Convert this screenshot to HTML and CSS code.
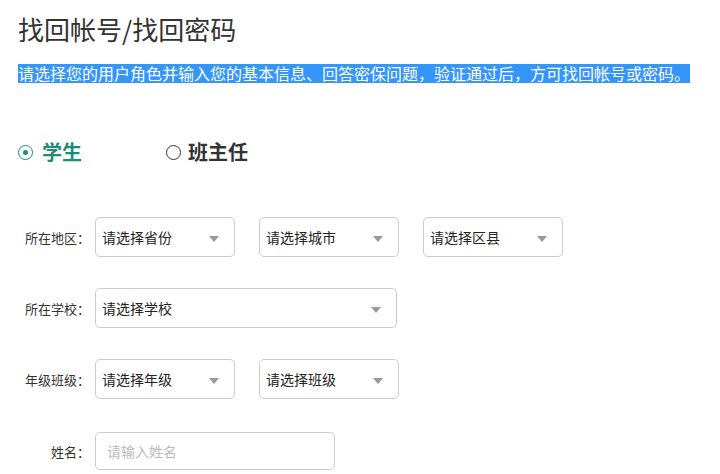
FILE: index.html
```html
<!DOCTYPE html>
<html lang="zh-CN">
<head>
<meta charset="utf-8">
<title>找回帐号/找回密码</title>
<link rel="stylesheet" href="styles.css">
</head>
<body>
<div class="page">
  <h1 class="title">找回帐号/找回密码</h1>
  <p class="intro">请选择您的用户角色并输入您的基本信息、回答密保问题，验证通过后，方可找回帐号或密码。</p>

  <div class="roles">
    <label class="role role-active"><span class="radio radio-on"></span><span class="role-text">学生</span></label>
    <label class="role"><span class="radio"></span><span class="role-text">班主任</span></label>
  </div>

  <div class="form">
    <div class="row">
      <span class="label">所在地区：</span>
      <div class="fields">
        <div class="select"><span class="select-text">请选择省份</span><span class="arrow"></span></div>
        <div class="select"><span class="select-text">请选择城市</span><span class="arrow"></span></div>
        <div class="select"><span class="select-text">请选择区县</span><span class="arrow"></span></div>
      </div>
    </div>
    <div class="row">
      <span class="label">所在学校：</span>
      <div class="fields">
        <div class="select select-wide"><span class="select-text">请选择学校</span><span class="arrow"></span></div>
      </div>
    </div>
    <div class="row">
      <span class="label">年级班级：</span>
      <div class="fields">
        <div class="select"><span class="select-text">请选择年级</span><span class="arrow"></span></div>
        <div class="select"><span class="select-text">请选择班级</span><span class="arrow"></span></div>
      </div>
    </div>
    <div class="row row-last">
      <span class="label">姓名：</span>
      <div class="fields">
        <input class="input" type="text" placeholder="请输入姓名">
      </div>
    </div>
  </div>
</div>
</body>
</html>
```

FILE: styles.css
```css
html, body {
  margin: 0;
  padding: 0;
  background: #ffffff;
}

body {
  font-family: "Noto Sans CJK SC", "Noto Sans", sans-serif;
  color: #333333;
  overflow: hidden;
}

.page {
  padding: 14px 0 0 18px;
}

.title {
  margin: 0;
  font-size: 26px;
  line-height: 30px;
  font-weight: 400;
  color: #333333;
}

.intro {
  margin: 20px 0 0 0;
  width: fit-content;
  padding-right: 0;
  font-size: 16px;
  line-height: 19px;
  color: #ffffff;
  background: #3495fb;
  white-space: nowrap;
}

.roles {
  display: flex;
  margin-top: 59px;
  height: 20px;
  align-items: center;
}

.role {
  display: flex;
  align-items: center;
  width: 148px;
  font-size: 20px;
  font-weight: 700;
  color: #333333;
}

.role-active {
  color: #1e8c76;
}

.radio {
  box-sizing: border-box;
  width: 15px;
  height: 15px;
  border: 1.6px solid #333333;
  border-radius: 50%;
  margin-right: 9px;
  display: flex;
  align-items: center;
  justify-content: center;
}

.role + .role .radio {
  margin-right: 7px;
}

.radio-on {
  border-color: #1e8c76;
}

.radio-on::after {
  content: "";
  width: 5px;
  height: 5px;
  border-radius: 50%;
  background: #1e8c76;
}

.role-text {
  line-height: 20px;
}

.form {
  margin-top: 55px;
  display: flex;
  flex-direction: column;
  gap: 31px;
}

.row {
  display: flex;
  align-items: center;
}

.row-last {
  margin-top: 2px;
}

.label {
  width: 72px;
  padding-right: 5px;
  text-align: right;
  font-size: 13px;
  color: #333333;
  white-space: nowrap;
}

.fields {
  display: flex;
  gap: 24px;
}

.select {
  box-sizing: border-box;
  position: relative;
  width: 140px;
  height: 40px;
  border: 1px solid #cccccc;
  border-radius: 5px;
  display: flex;
  align-items: center;
  padding-left: 6px;
  background: #ffffff;
}

.select-wide {
  width: 302px;
}

.select-text {
  font-size: 14px;
  color: #222222;
}

.arrow {
  position: absolute;
  right: 15px;
  top: 18px;
  width: 0;
  height: 0;
  border-left: 5px solid transparent;
  border-right: 5px solid transparent;
  border-top: 6px solid #999999;
}

.input {
  box-sizing: border-box;
  width: 240px;
  height: 38px;
  border: 1px solid #cccccc;
  border-radius: 5px;
  padding: 0 11px;
  font-family: "Noto Sans CJK SC", "Noto Sans", sans-serif;
  font-size: 14px;
  color: #333333;
  outline: none;
}

.input::placeholder {
  color: #bbbbbb;
}
```
